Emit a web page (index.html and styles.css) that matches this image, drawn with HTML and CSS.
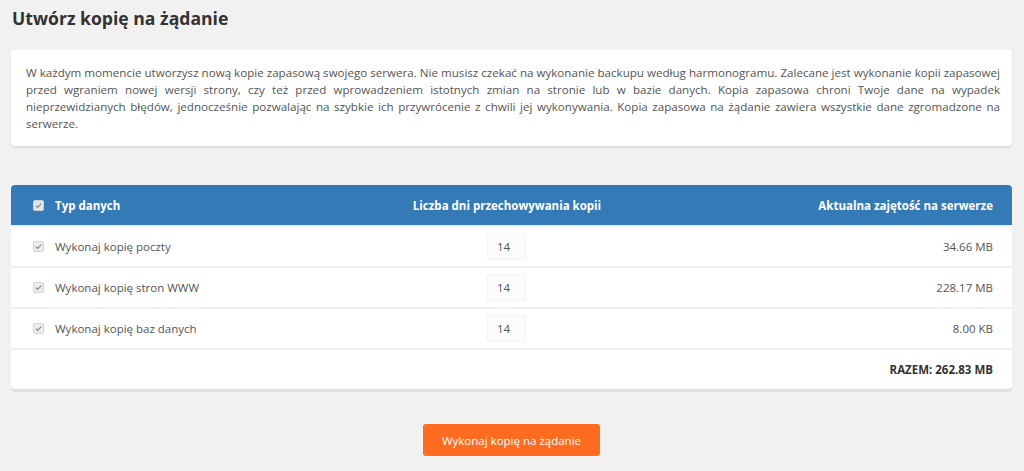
FILE: index.html
```html
<!DOCTYPE html>
<html lang="pl">
<head>
    <meta charset="UTF-8">
    <meta name="viewport" content="width=device-width, initial-scale=1.0">
    <title>Utwórz kopię na żądanie</title>
    <link rel="stylesheet" href="styles.css">
</head>
<body>

<h1 class="page-title">Utwórz kopię na żądanie</h1>

<div class="info-card">
    <p>W każdym momencie utworzysz nową kopie zapasową swojego serwera. Nie musisz czekać na wykonanie backupu według harmonogramu. Zalecane jest wykonanie kopii zapasowej<br>
    przed wgraniem nowej wersji strony, czy też przed wprowadzeniem istotnych zmian na stronie lub w bazie danych. Kopia zapasowa chroni Twoje dane na wypadek<br>
    nieprzewidzianych błędów, jednocześnie pozwalając na szybkie ich przywrócenie z chwili jej wykonywania. Kopia zapasowa na żądanie zawiera wszystkie dane zgromadzone na<br>
    serwerze.</p>
</div>

<div class="backup-table">
    <div class="row head">
        <div class="cell type"><span class="check"></span>Typ danych</div>
        <div class="cell days">Liczba dni przechowywania kopii</div>
        <div class="cell size">Aktualna zajętość na serwerze</div>
    </div>
    <div class="row">
        <div class="cell type"><span class="check"></span>Wykonaj kopię poczty</div>
        <div class="cell days"><input class="days-input" type="text" value="14"></div>
        <div class="cell size">34.66 MB</div>
    </div>
    <div class="row">
        <div class="cell type"><span class="check"></span>Wykonaj kopię stron WWW</div>
        <div class="cell days"><input class="days-input" type="text" value="14"></div>
        <div class="cell size">228.17 MB</div>
    </div>
    <div class="row">
        <div class="cell type"><span class="check"></span>Wykonaj kopię baz danych</div>
        <div class="cell days"><input class="days-input" type="text" value="14"></div>
        <div class="cell size">8.00 KB</div>
    </div>
    <div class="row total">
        <div class="cell size">RAZEM: 262.83 MB</div>
    </div>
</div>

<div class="actions">
    <button class="backup-button" type="button">Wykonaj kopię na żądanie</button>
</div>

</body>
</html>
```

FILE: styles.css
```css
body {
    font-family: 'Open Sans', 'Noto Sans', sans-serif;
    margin: 0;
    padding: 0 12px 0 11px;
    background-color: #f1f1f1;
    color: #555;
    font-size: 11.5px;
}

.page-title {
    font-size: 17.6px;
    line-height: 24px;
    font-weight: 700;
    color: #333;
    margin: 6px 0 20px 1px;
}

.info-card {
    background-color: white;
    border-radius: 4px;
    padding: 14px 12px 14px 15px;
    box-shadow: 0 2px 2px rgba(0, 0, 0, 0.08);
}

.info-card p {
    margin: 0;
    font-size: 11.6px;
    line-height: 17px;
    text-align: justify;
    text-align-last: justify;
    color: #555;
}

.backup-table {
    margin-top: 39px;
    background-color: white;
    border-radius: 4px;
    box-shadow: 0 3px 0 #dce0e3;
}

.row {
    display: grid;
    grid-template-columns: 299px 350px 1fr;
    align-items: center;
    height: 39px;
    padding: 0 19px 0 22px;
    border-top: 2px solid #f0f0f0;
}

.row.head {
    height: 40px;
    border-top: none;
    background-color: #337ab7;
    color: white;
    font-weight: 700;
    border-radius: 4px 4px 0 0;
}

.row.total {
    grid-template-columns: 1fr;
    font-weight: 700;
    color: #333;
}

.cell.type {
    display: flex;
    align-items: center;
}

.cell.days {
    text-align: center;
}

.cell.size {
    text-align: right;
}

.check {
    width: 9px;
    height: 9px;
    margin-right: 11px;
    border: 1px solid #d4d4d4;
    border-radius: 2px;
    background: #ececec url("data:image/svg+xml,%3Csvg xmlns='http://www.w3.org/2000/svg' viewBox='0 0 10 10'%3E%3Cpath d='M2 5.2l2 2 4-4.4' fill='none' stroke='%23888' stroke-width='1.2'/%3E%3C/svg%3E") center / 9px 9px no-repeat;
}

.head .check {
    background-color: #e4e4e4;
    border-color: #c8d4e0;
}

.days-input {
    width: 39px;
    height: 27px;
    box-sizing: border-box;
    padding: 0 0 0 9px;
    border: 1px solid #f3f3f3;
    border-radius: 3px;
    background-color: #fcfcfc;
    font-family: inherit;
    font-size: 11.5px;
    color: #555;
    margin-left: -1px;
}

.actions {
    display: flex;
    justify-content: center;
    padding-top: 35px;
}

.backup-button {
    height: 32px;
    padding: 0 19px;
    border: none;
    border-radius: 3px;
    background-color: #ff6b1f;
    color: white;
    font-family: inherit;
    font-size: 11.5px;
    cursor: pointer;
}
```
